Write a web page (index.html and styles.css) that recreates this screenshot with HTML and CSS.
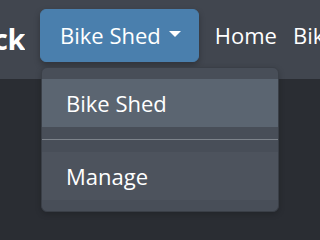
FILE: index.html
```html
<!DOCTYPE html>
<html>
<head>
<meta charset="utf-8">
<link rel="stylesheet" href="styles.css">
</head>
<body>
<nav class="navbar">
  <div class="brand-wrap"><a class="brand">BikeRack</a></div>
  <div class="dropdown">
    <button class="btn">Bike Shed<span class="caret"></span></button>
    <div class="menu">
      <a class="item active">Bike Shed</a>
      <div class="divider"></div>
      <a class="item manage">Manage</a>
    </div>
  </div>
  <a class="nav-link">Home</a>
  <a class="nav-link">Bikes</a>
</nav>
<main class="content"></main>
</body>
</html>
```
FILE: styles.css
```css
html, body {
  margin: 0;
  padding: 0;
  height: 100%;
  overflow: hidden;
}
body {
  background: #2a2d33;
  font-family: "Open Sans", "Noto Sans", sans-serif;
  color: #ffffff;
}
.navbar {
  display: flex;
  align-items: flex-start;
  height: 79px;
  box-sizing: border-box;
  padding-top: 9px;
  background: #41464f;
  white-space: nowrap;
}
.brand-wrap {
  width: 25px;
  flex: none;
  display: flex;
  justify-content: flex-end;
  overflow: hidden;
  margin-right: 15px;
}
.brand {
  flex: none;
  font-size: 29px;
  font-weight: 700;
  line-height: 42px;
  margin-top: 9px;
  letter-spacing: -0.5px;
}
.dropdown {
  position: relative;
  flex: none;
}
.btn {
  display: flex;
  align-items: center;
  height: 53px;
  box-sizing: border-box;
  padding: 9px 17px 9px 19px;
  border: 1px solid #4a7fad;
  border-radius: 6px;
  background: #4a7fad;
  color: #ffffff;
  font-family: inherit;
  font-size: 22px;
  line-height: 33px;
  box-shadow: 0 3px 6px rgba(0, 0, 0, 0.28);
}
.caret {
  display: inline-block;
  width: 0;
  height: 0;
  margin-left: 8px;
  margin-top: -4px;
  border-top: 6px solid #ffffff;
  border-left: 6px solid transparent;
  border-right: 6px solid transparent;
}
.menu {
  position: absolute;
  left: 1px;
  top: 58px;
  width: 238px;
  box-sizing: border-box;
  padding: 11px 0 11px;
  background: #484e58;
  border: 1px solid #3a3f47;
  border-radius: 6px;
  box-shadow: 0 2px 6px rgba(0, 0, 0, 0.2);
  z-index: 10;
}
.item {
  display: block;
  padding: 7px 24px;
  font-size: 22px;
  line-height: 34px;
  color: #ffffff;
}
.item.active {
  background: #5b6571;
}
.item.manage {
  background: #4d535d;
}
.divider {
  height: 1px;
  margin: 12px 0;
  background: #7d838b;
}
.nav-link {
  flex: none;
  font-size: 22px;
  line-height: 33px;
  margin-top: 10px;
  margin-left: 16px;
  color: #ffffff;
}
.content {
  display: block;
}
```
